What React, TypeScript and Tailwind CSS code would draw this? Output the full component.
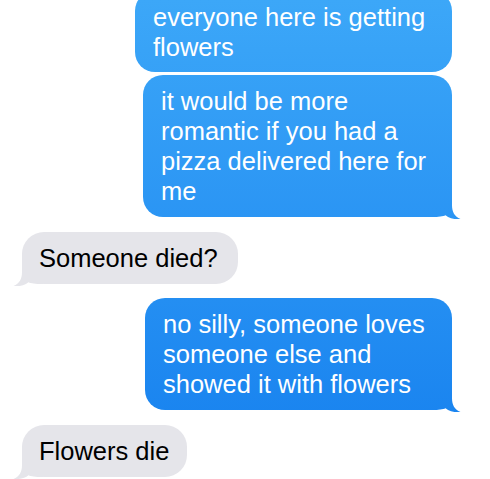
const font = { fontFamily: '"Liberation Sans", Arial, sans-serif' }

// tail shape, 30x26 box; bubble edge sits at x=21, bottom at y=24
const tailClip =
  "[clip-path:path('M21_0_L21_12_C21_19_23.5_23.5_29.5_26_C24_26.6_18_25.2_14.5_22.2_C12_23.4_8_24_0_24_L0_0_Z')]"

const Blue = ({ lines, className, tail }: { lines: string[]; className: string; tail?: boolean }) => (
  <div className={`relative self-end mr-[38px] rounded-[20px] bg-fixed bg-linear-to-b from-[#3ca7f8] to-[#147fee] text-white pl-[18px] py-[11px] ${className}`}>
    {tail && (
      <div className={`absolute right-[-9px] bottom-[-2px] w-[30px] h-[26px] bg-fixed bg-linear-to-b from-[#3ca7f8] to-[#147fee] ${tailClip}`} />
    )}
    {lines.map((l, i) => (
      <div key={i} className="relative whitespace-nowrap">{l}</div>
    ))}
  </div>
)

const Gray = ({ text, className }: { text: string; className: string }) => (
  <div className={`relative self-start ml-[22px] rounded-[22px] bg-[#e5e5ea] text-black pl-[17px] py-[11px] whitespace-nowrap ${className}`}>
    <div className={`absolute left-[-9px] bottom-[-2px] w-[30px] h-[26px] bg-[#e5e5ea] -scale-x-100 ${tailClip}`} />
    <span className="relative">{text}</span>
  </div>
)

export default function App() {
  return (
    <div className="w-full h-[479px] overflow-hidden bg-white flex flex-col text-[25.5px] leading-[30px]" style={font}>
      <Blue className="w-[317px] mt-[-9px] pb-[10px]" lines={["everyone here is getting", "flowers"]} />
      <Blue
        className="w-[309px] mt-[3px]"
        tail
        lines={["it would be more", "romantic if you had a", "pizza delivered here for", "me"]}
      />
      <Gray className="w-[216px] mt-[15px]" text="Someone died?" />
      <Blue
        className="w-[307px] mt-[14px]"
        tail
        lines={["no silly, someone loves", "someone else and", "showed it with flowers"]}
      />
      <Gray className="w-[165px] mt-[15px]" text="Flowers die" />
    </div>
  )
}
